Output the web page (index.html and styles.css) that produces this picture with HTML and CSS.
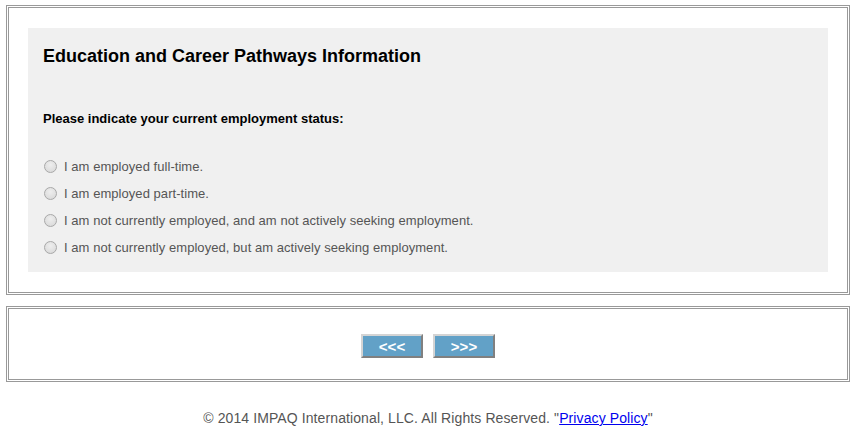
FILE: index.html
```html
<!DOCTYPE html>
<html>
<head>
<meta charset="utf-8">
<link rel="stylesheet" href="styles.css">
</head>
<body>
<div class="page">
  <div class="box box-main">
    <div class="panel">
      <h1 class="title">Education and Career Pathways Information</h1>
      <p class="question">Please indicate your current employment status:</p>
      <ul class="options">
        <li class="option"><input type="radio" name="emp" class="radio"><span>I am employed full-time.</span></li>
        <li class="option"><input type="radio" name="emp" class="radio"><span>I am employed part-time.</span></li>
        <li class="option"><input type="radio" name="emp" class="radio"><span>I am not currently employed, and am not actively seeking employment.</span></li>
        <li class="option"><input type="radio" name="emp" class="radio"><span>I am not currently employed, but am actively seeking employment.</span></li>
      </ul>
    </div>
  </div>
  <div class="box box-nav">
    <button class="navbtn">&lt;&lt;&lt;</button>
    <button class="navbtn">&gt;&gt;&gt;</button>
  </div>
  <div class="footer">© 2014 IMPAQ International, LLC. All Rights Reserved. "<a href="#" class="link">Privacy Policy</a>"</div>
</div>
</body>
</html>
```
FILE: styles.css
```css
html, body {
  margin: 0;
  padding: 0;
  background: #fff;
  font-family: "Liberation Sans", Arial, sans-serif;
}
.page {
  width: 844px;
  margin: 5px 0 0 6px;
}
.box {
  border: 3px double #999;
}
.box-main {
  padding: 20px 0;
}
.panel {
  width: 800px;
  height: 244px;
  margin: 0 auto;
  background: #f0f0f0;
  box-sizing: border-box;
  padding: 17px 15px 0;
}
.title {
  margin: 0;
  font-size: 18px;
  line-height: 22px;
  font-weight: bold;
  color: #000;
}
.question {
  margin: 44px 0 0;
  font-size: 13px;
  line-height: 16px;
  font-weight: bold;
  color: #000;
}
.options {
  list-style: none;
  margin: 26px 0 0;
  padding: 0;
}
.option {
  display: flex;
  align-items: center;
  height: 27px;
  font-size: 13px;
  letter-spacing: 0.05px;
  color: #555;
}
.radio {
  appearance: none;
  -webkit-appearance: none;
  width: 13px;
  height: 13px;
  margin: 0 7px 0 1px;
  border: 1px solid #a8a8a8;
  border-radius: 50%;
  background: radial-gradient(circle at 50% 35%, #eeeeee 0%, #d6d6d6 100%);
  box-sizing: border-box;
}
.box-nav {
  margin-top: 11px;
  padding: 25px 0 21px;
  display: flex;
  justify-content: center;
  gap: 10px;
}
.navbtn {
  width: 62px;
  height: 24px;
  padding: 0;
  background: #62a1c7;
  color: #fff;
  font-family: "Liberation Sans", Arial, sans-serif;
  font-size: 15px;
  font-weight: bold;
  border: 2px solid;
  border-color: #d4d4d4 #808080 #808080 #d4d4d4;
}
.footer {
  margin-top: 28px;
  text-align: center;
  font-size: 14px;
  line-height: 16px;
  letter-spacing: 0.1px;
  color: #555;
}
.link {
  color: #0000ee;
  text-decoration: underline;
}
```
